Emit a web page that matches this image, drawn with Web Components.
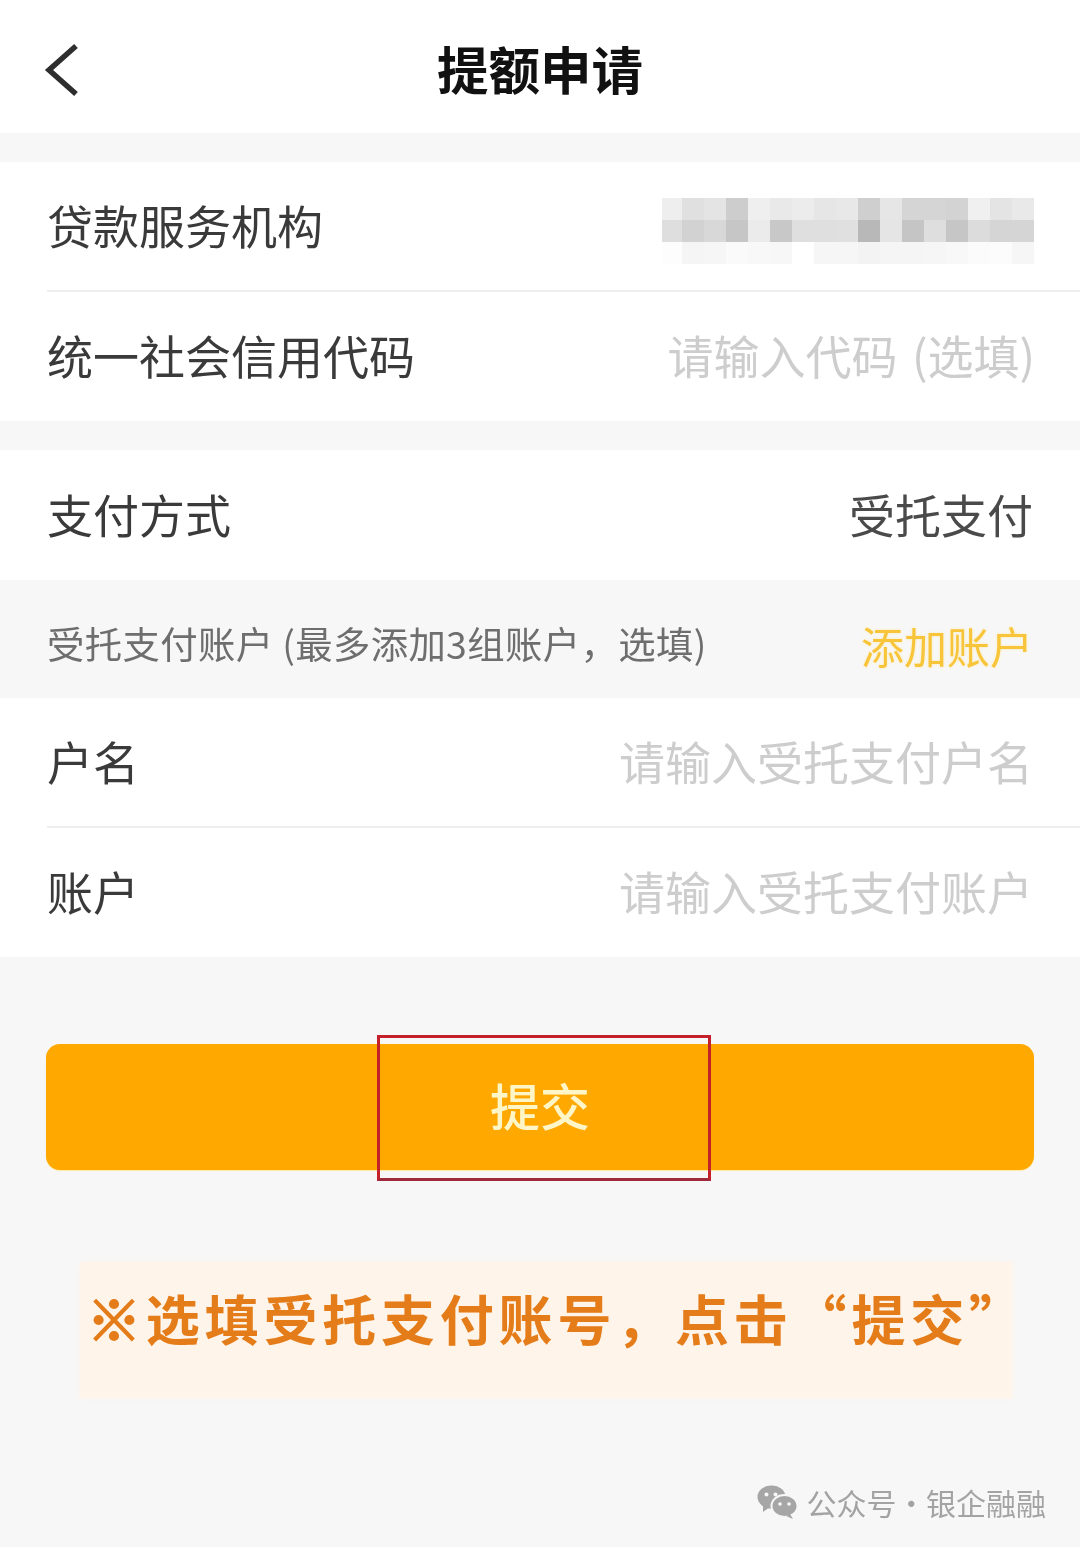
<!DOCTYPE html>
<html lang="zh">
<head>
<meta charset="utf-8">
<title>提额申请</title>
<style>
    html, body { margin: 0; padding: 0; background: #f7f7f7; }
    body {
        width: 1080px;
        height: 1547px;
        overflow: hidden;
        font-family: "Noto Sans CJK SC", "Noto Sans", sans-serif;
        filter: blur(0.5px);
    }
    .gap { display: block; height: 29px; }
    .optional { margin-right: -2px; word-spacing: 4px; }
</style>
</head>
<body>
<title-bar>提额申请</title-bar>
<div class="gap"></div>
<form-row label="贷款服务机构" divider><blur-block></blur-block></form-row>
<form-row label="统一社会信用代码" hint><span class="optional">请输入代码 (选填)</span></form-row>
<div class="gap"></div>
<form-row label="支付方式" value>受托支付</form-row>
<section-strip action="添加账户">受托支付账户 (最多添加3组账户，选填)</section-strip>
<form-row label="户名" hint divider>请输入受托支付户名</form-row>
<form-row label="账户" hint>请输入受托支付账户</form-row>
<submit-button>提交</submit-button>
<note-banner>选填受托支付账号，点击“提交”</note-banner>
<source-mark>公众号 · 银企融融</source-mark>

<script>
class TitleBar extends HTMLElement {
    constructor() {
        super();
        this.attachShadow({mode: "open"});
        this.shadowRoot.innerHTML = `
            <style>
                :host {
                    display: flex;
                    align-items: center;
                    justify-content: center;
                    position: relative;
                    height: 133px;
                    padding-top: 2px;
                    box-sizing: border-box;
                    background: #fff;
                    color: #111;
                    font-size: 51.5px;
                    font-weight: 700;
                }
                svg { position: absolute; left: 40px; top: 40px; }
            </style>
            <svg width="44" height="60" viewBox="0 0 44 60" fill="none" stroke="#2e2e2e" stroke-width="5.5">
                <path d="M36 6 L9 30 L36 54"></path>
            </svg>
            <slot></slot>
        `;
    }
}

class FormRow extends HTMLElement {
    constructor() {
        super();
        this.attachShadow({mode: "open"});
        this.shadowRoot.innerHTML = `
            <style>
                :host {
                    display: block;
                    background: #fff;
                    padding-left: 47px;
                    font-size: 46px;
                    color: #3a3a3a;
                }
                .inner {
                    display: flex;
                    align-items: center;
                    justify-content: space-between;
                    box-sizing: border-box;
                    height: 129px;
                    padding: 0 47px 5px 0;
                    white-space: nowrap;
                }
                :host([divider]) .inner { height: 130px; border-bottom: 2px solid #efefef; }
                .value { color: #4a4a4a; }
                :host([hint]) .value { color: #cdcdcd; }
                :host([value]) .inner { height: 130px; }
            </style>
            <div class="inner">
                <span id="label"></span>
                <span class="value"><slot></slot></span>
            </div>
        `;
    }
    connectedCallback() {
        this.shadowRoot.querySelector("#label").textContent = this.getAttribute("label");
    }
}

class BlurBlock extends HTMLElement {
    constructor() {
        super();
        this.attachShadow({mode: "open"});
        // 17 columns by 3 rows of the pixelated value, grey level per cell
        const rows = [
            "ee e0 e4 cd ef e9 ec e6 e8 cf e6 d5 d5 d3 f0 e4 e9",
            "de d2 d8 c6 eb c8 df df e0 b8 e5 c5 de c6 dc d5 d5",
            "fd f5 f6 fa f8 f7 ff f6 f6 f3 f5 f5 f6 f8 fb fc f6"
        ];
        let html = "";
        for (let row of rows) {
            for (let level of row.split(" ")) {
                html += `<i style="background:#${level}${level}${level}"></i>`;
            }
        }
        this.shadowRoot.innerHTML = `
            <style>
                :host {
                    display: grid;
                    grid-template-columns: 20px repeat(16, 22px);
                    grid-auto-rows: 22px;
                    margin: 14px -1px 0 0;
                }
            </style>
            ${html}
        `;
    }
}

class SectionStrip extends HTMLElement {
    constructor() {
        super();
        this.attachShadow({mode: "open"});
        this.shadowRoot.innerHTML = `
            <style>
                :host {
                    display: flex;
                    align-items: center;
                    justify-content: space-between;
                    box-sizing: border-box;
                    height: 118px;
                    padding: 8px 47px 0 47px;
                    background: #f7f7f7;
                    color: #6e6e6e;
                    font-size: 37.4px;
                    white-space: nowrap;
                }
                .text { letter-spacing: 0.35px; }
                .action {
                    color: #f8c53a;
                    font-size: 43px;
                    padding-top: 4px;
                    text-shadow: 0 0 3px #fdeab0;
                }
            </style>
            <span class="text"><slot></slot></span>
            <span class="action"></span>
        `;
    }
    connectedCallback() {
        this.shadowRoot.querySelector(".action").textContent = this.getAttribute("action");
    }
}

class SubmitButton extends HTMLElement {
    constructor() {
        super();
        this.attachShadow({mode: "open"});
        this.shadowRoot.innerHTML = `
            <style>
                :host {
                    display: flex;
                    align-items: center;
                    justify-content: center;
                    position: relative;
                    box-sizing: border-box;
                    height: 126px;
                    margin: 87px 46px 0;
                    padding-bottom: 7px;
                    border-radius: 14px;
                    background: #ffa800;
                    box-shadow: 0 1px 1px #ffe9a8;
                    color: #fff6c8;
                    font-size: 50px;
                    font-weight: 500;
                }
                .mark {
                    position: absolute;
                    left: 331px;
                    top: -9px;
                    width: 334px;
                    height: 146px;
                    box-sizing: border-box;
                    border: 3px solid #c4202a;
                    border-bottom-color: #9e2a3c;
                }
            </style>
            <slot></slot>
            <div class="mark"></div>
        `;
    }
}

class NoteBanner extends HTMLElement {
    constructor() {
        super();
        this.attachShadow({mode: "open"});
        this.shadowRoot.innerHTML = `
            <style>
                :host {
                    display: flex;
                    box-sizing: border-box;
                    height: 136px;
                    margin: 92px 68px 0 80px;
                    padding: 16px 0 0 7px;
                    background: #fff4e9;
                    box-shadow: 0 0 5px #fff4e9;
                    color: #e47c1a;
                    font-size: 54px;
                    font-weight: 700;
                    letter-spacing: 4.8px;
                    white-space: nowrap;
                }
                .star { -webkit-text-stroke: 2px #e47c1a; }
            </style>
            <span><span class="star">※</span><slot></slot></span>
        `;
    }
}

class SourceMark extends HTMLElement {
    constructor() {
        super();
        this.attachShadow({mode: "open"});
        this.shadowRoot.innerHTML = `
            <style>
                :host {
                    display: flex;
                    align-items: center;
                    justify-content: flex-end;
                    gap: 9px;
                    margin: 82px 34px 0 0;
                    color: #a3a3a3;
                    font-size: 30px;
                    word-spacing: -7px;
                    white-space: nowrap;
                }
            </style>
            <svg width="41" height="34" viewBox="0 0 41 34">
                <ellipse cx="14.5" cy="12" rx="14" ry="11.5" fill="#a6a6a6"></ellipse>
                <path d="M6 20 L6 27 L13 22 Z" fill="#a6a6a6"></path>
                <ellipse cx="27.5" cy="21" rx="13" ry="11" fill="#a6a6a6" stroke="#f7f7f7" stroke-width="2"></ellipse>
                <path d="M33 29 L36 34 L29 31 Z" fill="#a6a6a6"></path>
                <circle cx="9.5" cy="9.5" r="2" fill="#f7f7f7"></circle>
                <circle cx="18.5" cy="9.5" r="2" fill="#f7f7f7"></circle>
                <circle cx="23" cy="19" r="1.8" fill="#f7f7f7"></circle>
                <circle cx="32" cy="19" r="1.8" fill="#f7f7f7"></circle>
            </svg>
            <span><slot></slot></span>
        `;
    }
}

customElements.define("title-bar", TitleBar);
customElements.define("form-row", FormRow);
customElements.define("blur-block", BlurBlock);
customElements.define("section-strip", SectionStrip);
customElements.define("submit-button", SubmitButton);
customElements.define("note-banner", NoteBanner);
customElements.define("source-mark", SourceMark);
</script>
</body>
</html>
